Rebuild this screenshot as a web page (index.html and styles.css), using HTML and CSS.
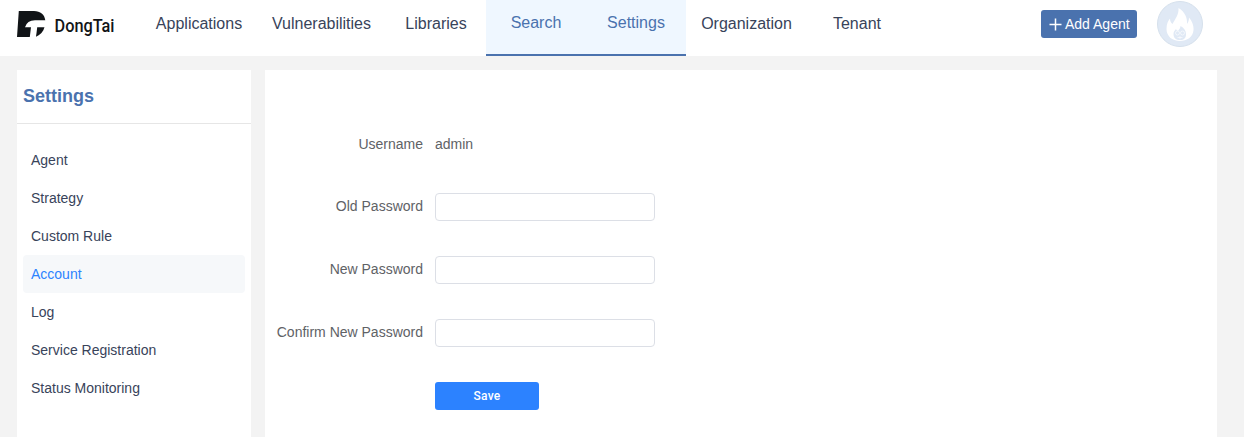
FILE: index.html
```html
<!DOCTYPE html>
<html lang="en">
<head>
<meta charset="utf-8">
<title>DongTai</title>
<link rel="stylesheet" href="styles.css">
</head>
<body>
<header class="topbar">
  <svg class="logo" width="100" height="30" viewBox="0 0 100 30" role="img" aria-label="DongTai">
    <path fill="#111417" d="M1.800 2H17C23.500 2 27.500 5.500 28.300 11.200H18Q10 11.200 8 18.300H14L12.800 28H0Z"/>
    <path fill="#111417" d="M20.200 18.300H27.500Q26 24.500 19 27.800Z"/>
    <text class="logo-text" x="37.500" y="22.500" textLength="60" lengthAdjust="spacingAndGlyphs">DongTai</text>
  </svg>
  <nav class="nav">
    <a class="nav-item nav-apps">Applications</a>
    <a class="nav-item nav-vulns">Vulnerabilities</a>
    <a class="nav-item nav-libs">Libraries</a>
    <a class="nav-item active">Search</a>
    <a class="nav-item active">Settings</a>
    <a class="nav-item nav-org">Organization</a>
    <a class="nav-item">Tenant</a>
  </nav>
  <button class="add-agent">
    <svg width="13" height="13" viewBox="0 0 13 13"><path d="M6.500 .5V12.500M.5 6.500H12.500" stroke="#fff" stroke-width="1.500"/></svg>
    <span>Add Agent</span>
  </button>
  <svg class="avatar" width="46" height="46" viewBox="0 0 46 46">
    <circle cx="23" cy="23" r="22.500" fill="#e0e9f5" stroke="#d5e0ec"/>
    <path fill="#fff" d="M21.500 7C28 11 30.500 17 30 23C31.500 21 32 19 32 16.500C35 20 37 25 36.500 29C36 36 30 40 23 40C15 40 9.500 35 9.500 28C9.500 23 11 20 13 17.500C13 20 14 22 15.500 23C18 18 22 14 21.500 7Z"/>
    <path fill="#e0e9f5" d="M23.500 25C27 27 29 29.500 29 33C29 37 27 39 23 39C19 39 16.500 37 16.500 33C16.500 31 17.500 29.500 19 28C19.500 29 20 29.500 21 30C22 28.500 23.500 27 23.500 25Z"/>
    <g fill="none" stroke="#fff" stroke-opacity=".75" stroke-width=".8"><circle cx="20.500" cy="32" r="2"/><circle cx="25.500" cy="32" r="2"/><path d="M20.500 36.500H25.500M23 35V38"/></g>
  </svg>
</header>
<main class="page">
  <aside class="sidebar">
    <h1 class="sidebar-title">Settings</h1>
    <ul class="menu">
      <li class="menu-item">Agent</li>
      <li class="menu-item">Strategy</li>
      <li class="menu-item">Custom Rule</li>
      <li class="menu-item selected">Account</li>
      <li class="menu-item">Log</li>
      <li class="menu-item">Service Registration</li>
      <li class="menu-item">Status Monitoring</li>
    </ul>
  </aside>
  <form class="panel">
    <div class="row row-user"><span class="label">Username</span><span class="value">admin</span></div>
    <div class="row"><label class="label" for="old">Old Password</label><input class="field" id="old" type="password"></div>
    <div class="row"><label class="label" for="new">New Password</label><input class="field" id="new" type="password"></div>
    <div class="row"><label class="label" for="confirm">Confirm New Password</label><input class="field" id="confirm" type="password"></div>
    <button class="save" type="button">Save</button>
  </form>
</main>
</body>
</html>
```
FILE: styles.css
```css
* { box-sizing: border-box; }
body {
  margin: 0;
  height: 437px;
  overflow: hidden;
  background: #f3f3f3;
  font: 14px/20px "Liberation Sans", Arial, sans-serif;
  color: #38435a;
}
.topbar {
  display: flex;
  align-items: flex-start;
  height: 56px;
  padding-left: 17px;
  background: #fff;
}
.logo { flex: none; margin-top: 9px; overflow: visible; }
.logo-text {
  font: 500 18.500px Roboto, sans-serif;
  fill: #111417;
}
.nav { display: flex; margin-left: 25px; }
.nav-item {
  width: 100px;
  height: 56px;
  font-size: 16px;
  line-height: 48px;
  text-align: center;
}
.nav-apps { width: 114px; }
.nav-vulns { width: 131px; }
.nav-libs { width: 98px; margin-right: 1px; }
.nav-org { width: 121px; }
.nav-item.active {
  line-height: 46px;
  color: #4a72ae;
  background: #eff7ff;
  border-bottom: 2px solid #4a72ae;
}
.add-agent {
  display: flex;
  align-items: center;
  gap: 3px;
  width: 96px;
  height: 28px;
  margin: 10px 0 0 134px;
  padding: 0 0 0 8px;
  border: 0;
  border-radius: 3px;
  background: #4a72ae;
  color: #fff;
  font: 14px "Liberation Sans", Arial, sans-serif;
  white-space: nowrap;
}
.add-agent svg { flex: none; }
.avatar { margin: 1px 0 0 20px; }
.page {
  display: flex;
  gap: 14px;
  height: 381px;
  padding: 14px 27px 0 17px;
}
.sidebar { width: 234px; background: #fff; }
.sidebar-title {
  height: 54px;
  margin: 0;
  padding-left: 6px;
  border-bottom: 1px solid #e6e6e6;
  color: #4a72ae;
  font-size: 18px;
  line-height: 52px;
}
.menu { margin: 0; padding: 17px 6px 0; list-style: none; }
.menu-item {
  height: 38px;
  padding-left: 8px;
  border-radius: 4px;
  line-height: 38px;
}
.menu-item.selected { background: #f6f8fa; color: #2c82ff; }
.panel { flex: 1; padding-top: 60px; background: #fff; color: #606266; }
.row {
  display: flex;
  gap: 12px;
  height: 28px;
  margin-bottom: 35px;
}
.label { width: 158px; text-align: right; line-height: 27px; }
.row-user .label,
.row-user .value { line-height: 29px; }
.field {
  width: 220px;
  height: 28px;
  padding: 0 10px;
  border: 1px solid #dcdfe6;
  border-radius: 4px;
  background: #fff;
}
.save {
  display: block;
  width: 104px;
  height: 28px;
  margin-left: 170px;
  padding: 0;
  border: 0;
  border-radius: 3px;
  background: #2c82ff;
  color: #fff;
  font: 500 12px Roboto, sans-serif;
  letter-spacing: .3px;
}
```
